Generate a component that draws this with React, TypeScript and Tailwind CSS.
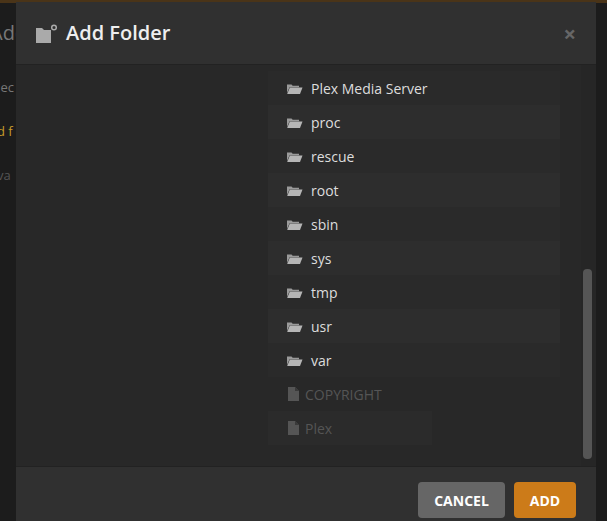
import React from 'react';

const folders = ['Plex Media Server', 'proc', 'rescue', 'root', 'sbin', 'sys', 'tmp', 'usr', 'var'];
const files = ['COPYRIGHT', 'Plex'];

const FolderIcon = () => (
  <svg width="17" height="13" viewBox="0 0 17 13" className="shrink-0">
    <path d="M1 2.5h4.5l1.2 1.3H13v1.4H3.6L1 11z" fill="#9a9a9a" />
    <path d="M3.8 5.6H16.5L14 12H1.2z" fill="#b5b5b5" />
  </svg>
);

const FileIcon = () => (
  <svg width="11" height="14" viewBox="0 0 11 14" className="shrink-0">
    <path d="M0 0h7l4 4v10H0z" fill="#555" />
    <path d="M7 0v4h4" fill="#3a3a3a" />
  </svg>
);

const App: React.FC = () => {
  return (
    <div className="relative w-[607px] h-[521px] overflow-hidden bg-[#1c1c1c]" style={{ fontFamily: '"Open Sans", "Noto Sans", sans-serif' }}>
      {/* page behind */}
      <div className="absolute inset-x-0 top-0 h-[3px] bg-[#4a3418]" />
      <div className="absolute left-[-10px] top-[18px] text-[20px] text-[#777]">Add</div>
      <div className="absolute left-[-6px] top-[78px] text-[13px] text-[#777]">llec</div>
      <div className="absolute left-[-3px] top-[122px] text-[13px] text-[#c59a2a]">d f</div>
      <div className="absolute left-[-3px] top-[166px] text-[13px] text-[#555]">va</div>

      {/* modal */}
      <div className="absolute left-[16px] top-[2px] w-[580px] h-[530px] flex flex-col bg-[#282828]">
        <div className="h-[63px] shrink-0 flex items-center px-5 bg-[#303030] border-b border-[#222]">
          <svg width="22" height="19" viewBox="0 0 22 19" className="mr-2">
            <path d="M0 4h6l2 2h7v13H0z" fill="#aaa" />
            <circle cx="18" cy="3.5" r="2.3" fill="none" stroke="#aaa" strokeWidth="1.5" />
          </svg>
          <span className="text-[20px] font-semibold text-[#eee]">Add Folder</span>
          <span className="ml-auto text-[22px] font-bold text-[#666] leading-none">×</span>
        </div>
        <div className="h-[401px] shrink-0 flex">
          <div className="w-[252px]" />
          <div className="flex-1 pt-[6px]">
            {folders.map((f, i) => (
              <div key={f} className={`h-[34px] w-[292px] flex items-center gap-2 pl-[18px] ${i % 2 === 1 ? 'bg-[#2d2d2d]' : 'bg-[#2a2a2a]'}`}>
                <FolderIcon />
                <span className="text-[14px] text-[#ddd]">{f}</span>
              </div>
            ))}
            {files.map((f, i) => (
              <div key={f} className={`h-[34px] flex items-center gap-[6px] pl-[20px] ${i === 1 ? 'w-[164px] bg-[#2b2b2b]' : 'w-[292px]'}`}>
                <FileIcon />
                <span className="text-[14px] text-[#555]">{f}</span>
              </div>
            ))}
          </div>
          <div className="w-[15px] bg-[#262626] flex flex-col">
            <div className="mt-[204px] ml-[2px] w-[9px] h-[190px] rounded bg-[#555]" />
          </div>
        </div>
        <div className="h-[64px] shrink-0 flex items-start justify-end gap-[9px] pr-[20px] pt-[15px] bg-[#303030] border-t border-[#222]">
          <button className="h-[36px] w-[87px] rounded-sm bg-[#666] text-[14px] font-bold text-white">CANCEL</button>
          <button className="h-[36px] w-[62px] rounded-sm bg-[#cc7b19] text-[14px] font-bold text-white">ADD</button>
        </div>
      </div>
    </div>
  );
};

export default App;
